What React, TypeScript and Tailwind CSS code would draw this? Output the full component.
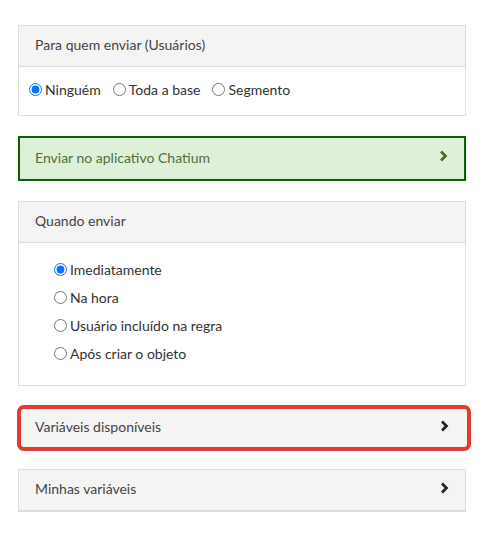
import React from "react";

const Chevron = ({ color }: { color: string }) => (
  <svg width="9" height="12" viewBox="0 0 9 12" className="shrink-0 -mt-[2px]">
    <path d="M2 1.5 L6.5 6 L2 10.5" fill="none" stroke={color} strokeWidth="2.7" strokeLinecap="butt" strokeLinejoin="miter" />
  </svg>
);

const Radio = ({ label, checked, name }: { label: string; checked?: boolean; name: string }) => (
  <label className="flex items-center gap-[3px]">
    <input type="radio" name={name} defaultChecked={checked} className="m-0 h-[13px] w-[13px]" />
    <span>{label}</span>
  </label>
);

export default function App() {
  return (
    <div className="min-h-[544px] bg-white pt-[25px] text-[14px] text-[#333]" style={{ fontFamily: "Lato, 'Open Sans', sans-serif" }}>
      <div className="mx-[18px] w-[448px] flex flex-col">
        {/* Panel 1 */}
        <div className="border border-[#dddddd] bg-white">
          <div className="h-[41px] bg-[#f4f4f4] border-b border-[#dddddd] flex items-center px-[16px] pb-[3px] text-[#444]">
            Para quem enviar (Usuários)
          </div>
          <div className="h-[48px] flex items-center gap-[12px] px-[10px] pb-[3px]">
            <Radio name="quem" label="Ninguém" checked />
            <Radio name="quem" label="Toda a base" />
            <Radio name="quem" label="Segmento" />
          </div>
        </div>

        {/* Green panel */}
        <div className="mt-[20px] h-[45px] bg-[#dff0d8] border-2 border-[#0a5e0a] flex items-center justify-between pl-[15px] pr-[16px] pb-[3px] text-[#4f6e3e]">
          <span>Enviar no aplicativo Chatium</span>
          <Chevron color="#4a6b2e" />
        </div>

        {/* Quando enviar */}
        <div className="mt-[20px] border border-[#dddddd] bg-white">
          <div className="h-[41px] bg-[#f4f4f4] border-b border-[#dddddd] flex items-center px-[16px] pb-[3px] text-[#444]">
            Quando enviar
          </div>
          <div className="h-[142px] flex flex-col pt-[16px] pl-[35px] gap-[7px]">
            <Radio name="quando" label="Imediatamente" checked />
            <Radio name="quando" label="Na hora" />
            <Radio name="quando" label="Usuário incluído na regra" />
            <Radio name="quando" label="Após criar o objeto" />
          </div>
        </div>

        {/* Variáveis disponíveis (highlighted) */}
        <div className="mt-[19px] -ml-[1px] w-[454px] h-[46px] border-4 border-[#e03c31] rounded-[7px] bg-[#f4f4f4] flex items-center justify-between pl-[14px] pr-[18px] pb-[3px] text-[#444]">
          <span>Variáveis disponíveis</span>
          <Chevron color="#222" />
        </div>

        {/* Minhas variáveis */}
        <div className="mt-[18px] h-[43px] border border-[#dddddd] border-b-2 bg-[#f4f4f4] flex items-center justify-between pl-[16px] pr-[16px] pb-[3px] text-[#444]">
          <span>Minhas variáveis</span>
          <Chevron color="#222" />
        </div>
      </div>
    </div>
  );
}
